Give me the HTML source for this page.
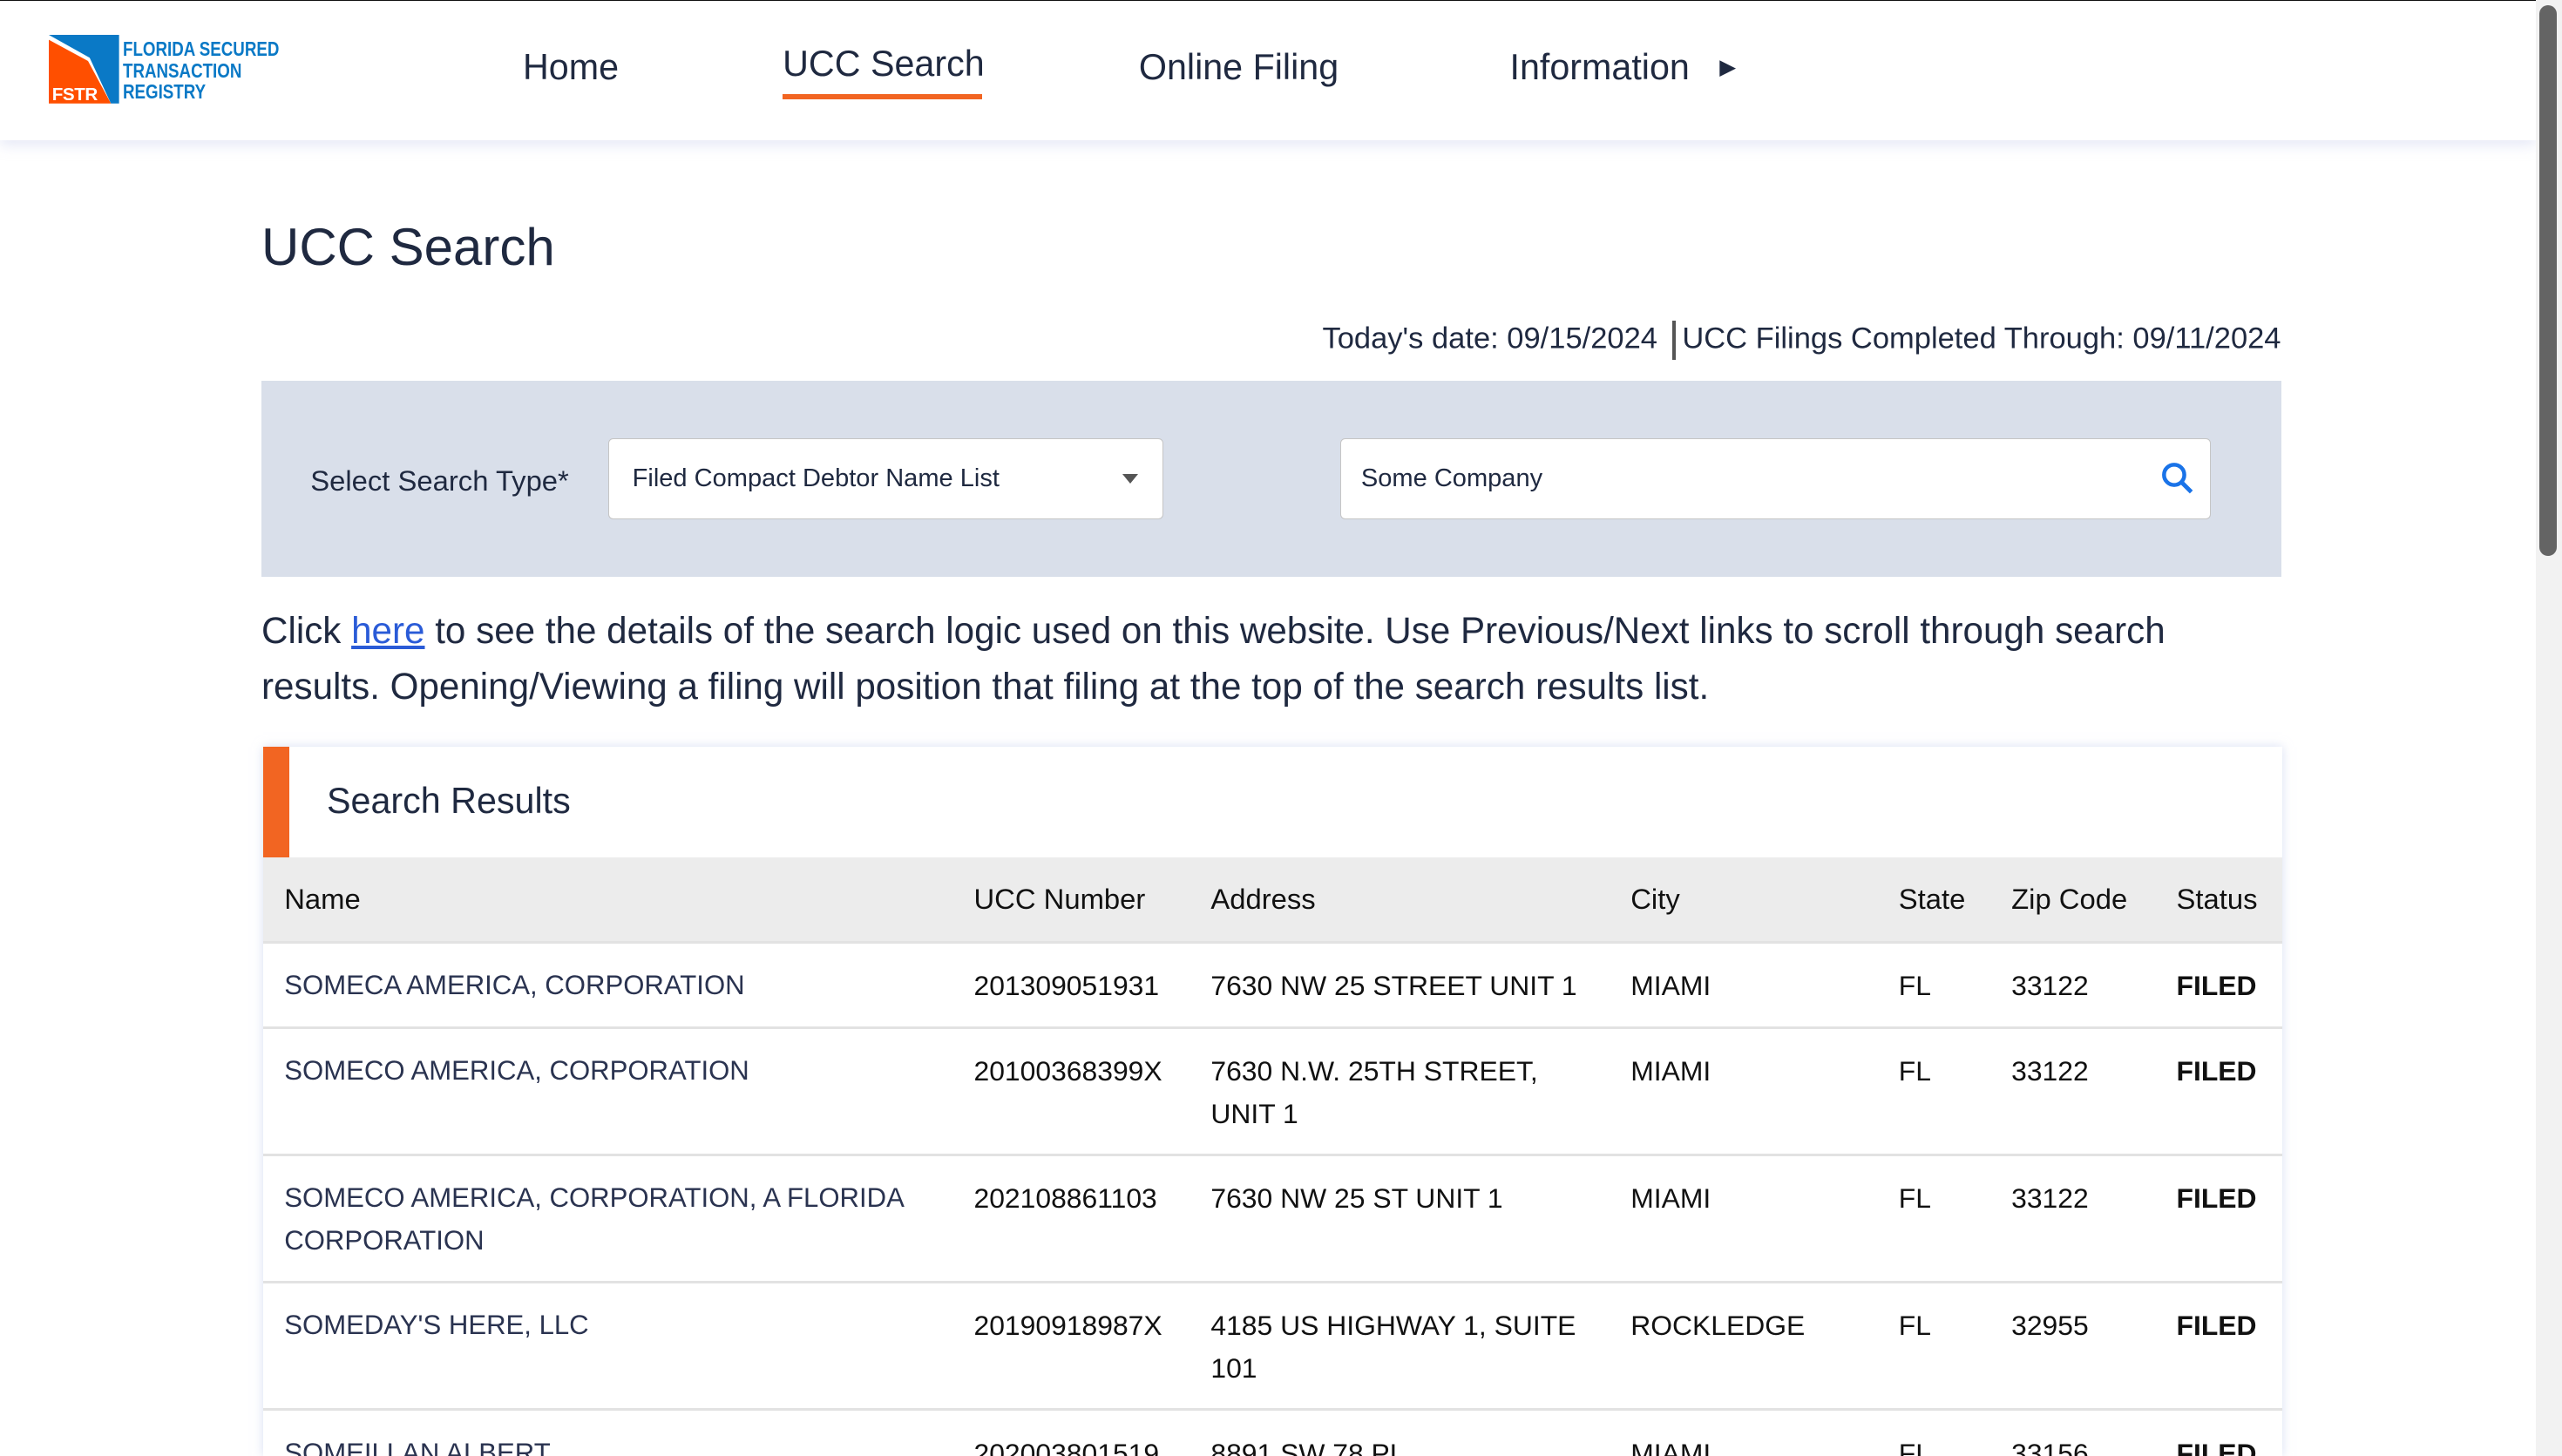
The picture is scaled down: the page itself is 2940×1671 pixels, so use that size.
<!DOCTYPE html>
<html><head><meta charset="utf-8"><style>
html,body{margin:0;padding:0;overflow:hidden;background:#fff}
body{width:1568px;height:891px;zoom:1.875;position:relative;font-family:"Liberation Sans",sans-serif;color:#1f2940;overflow:hidden}
.a{position:absolute;white-space:nowrap}
.hdr{position:absolute;left:0;top:0;width:1552px;height:86px;background:#fff;border-top:1px solid #111;box-sizing:border-box;box-shadow:0 3px 8px rgba(180,190,230,.35)}
.nav{font-size:22px;color:#1f2940;top:28px}
.tbl{position:absolute;left:161px;top:457px;width:1236px;height:434px;overflow:hidden;background:#fff;box-shadow:0 0 6px rgba(190,200,235,.6)}
.row{position:absolute;left:0;width:1236px;border-top:2px solid #e2e2e2;font-size:17px;color:#111}
.row span{position:absolute;top:13px;line-height:26px}
.row .n{left:13px;color:#2a3350;font-size:16.6px}
.row .s{font-weight:bold}
</style></head><body>
<div class="hdr">
 <svg class="a" style="left:30px;top:21px" width="44" height="42" viewBox="0 0 44 42">
  <polygon points="0,0 43,0 43,42 38,42 25,14 0,0" fill="#0a79c6"/>
  <polygon points="0,3 24,16 38,42 0,42" fill="#ff4f00"/>
  <text x="2" y="40" font-family="Liberation Sans" font-size="11" fill="#fff" font-weight="bold" textLength="28">FSTR</text>
 </svg>
 <div class="a" style="left:75px;top:23px;font-size:12.5px;line-height:13px;font-weight:bold;color:#0a79c6;transform:scaleX(.8);transform-origin:left">FLORIDA SECURED<br>TRANSACTION<br>REGISTRY</div>
 <div class="a nav" style="left:320px">Home</div>
 <div class="a nav" style="left:479px;top:26px">UCC Search</div>
 <div class="a" style="left:479px;top:57px;width:122px;height:3px;background:#f26522"></div>
 <div class="a nav" style="left:697px">Online Filing</div>
 <div class="a nav" style="left:924px">Information&nbsp;&nbsp; <span style="font-size:13px;position:relative;top:-3px">&#9654;</span></div>
</div>
<div class="a" style="left:1552px;top:0;width:16px;height:891px;background:#f2f2f2"></div>
<div class="a" style="left:1554px;top:3px;width:11px;height:337px;background:#646464;border-radius:6px"></div>

<div class="a" style="left:160px;top:133px;font-size:32px;color:#1f2940">UCC Search</div>
<div class="a" style="right:172px;top:196px;font-size:18.4px">Today's date: 09/15/2024 <span style="display:inline-block;width:2px;height:24px;background:#555;vertical-align:middle;margin:0 4px"></span>UCC Filings Completed Through: 09/11/2024</div>

<div class="a" style="left:160px;top:233px;width:1236px;height:120px;background:#d9dfea"></div>
<div class="a" style="left:190px;top:284px;font-size:17.5px">Select Search Type*</div>
<div class="a" style="left:372px;top:268px;width:340px;height:50px;box-sizing:border-box;background:#fff;border:1px solid #c5c5c5;border-radius:3px"></div>
<div class="a" style="left:387px;top:284px;font-size:15.5px">Filed Compact Debtor Name List</div>
<div class="a" style="left:687px;top:290px;width:0;height:0;border-left:5px solid transparent;border-right:5px solid transparent;border-top:6px solid #555"></div>
<div class="a" style="left:820px;top:268px;width:533px;height:50px;box-sizing:border-box;background:#fff;border:1px solid #c5c5c5;border-radius:3px"></div>
<div class="a" style="left:833px;top:284px;font-size:15.5px">Some Company</div>
<svg class="a" style="left:1322px;top:282px" width="22" height="22" viewBox="0 0 22 22"><circle cx="8.5" cy="8.5" r="6.2" fill="none" stroke="#1a73e8" stroke-width="2.4"/><line x1="13" y1="13" x2="19" y2="19" stroke="#1a73e8" stroke-width="2.6"/></svg>

<div class="a" style="left:160px;top:369px;font-size:22.5px;line-height:34px;white-space:normal;width:1240px">Click <span style="color:#2a5bd7;text-decoration:underline">here</span> to see the details of the search logic used on this website. Use Previous/Next links to scroll through search<br>results. Opening/Viewing a filing will position that filing at the top of the search results list.</div>

<div class="tbl">
 <div class="a" style="left:0;top:0;width:16px;height:68px;background:#f26522"></div>
 <div class="a" style="left:39px;top:21px;font-size:22px">Search Results</div>
 <div class="a" style="left:0;top:68px;width:1236px;height:52px;background:#ececec;font-size:17.5px;color:#111">
  <span class="a" style="left:13px;top:15px">Name</span><span class="a" style="left:435px;top:15px">UCC Number</span><span class="a" style="left:580px;top:15px">Address</span><span class="a" style="left:837px;top:15px">City</span><span class="a" style="left:1001px;top:15px">State</span><span class="a" style="left:1070px;top:15px">Zip Code</span><span class="a" style="left:1171px;top:15px">Status</span>
 </div>
 <div class="row" style="top:119px;height:52px"><span class="n">SOMECA AMERICA, CORPORATION</span><span style="left:435px">201309051931</span><span style="left:580px">7630 NW 25 STREET UNIT 1</span><span style="left:837px">MIAMI</span><span style="left:1001px">FL</span><span style="left:1070px">33122</span><span class="s" style="left:1171px">FILED</span></div>
 <div class="row" style="top:171px;height:78px"><span class="n">SOMECO AMERICA, CORPORATION</span><span style="left:435px">20100368399X</span><span style="left:580px">7630 N.W. 25TH STREET,<br>UNIT 1</span><span style="left:837px">MIAMI</span><span style="left:1001px">FL</span><span style="left:1070px">33122</span><span class="s" style="left:1171px">FILED</span></div>
 <div class="row" style="top:249px;height:78px"><span class="n">SOMECO AMERICA, CORPORATION, A FLORIDA<br>CORPORATION</span><span style="left:435px">202108861103</span><span style="left:580px">7630 NW 25 ST UNIT 1</span><span style="left:837px">MIAMI</span><span style="left:1001px">FL</span><span style="left:1070px">33122</span><span class="s" style="left:1171px">FILED</span></div>
 <div class="row" style="top:327px;height:78px"><span class="n">SOMEDAY'S HERE, LLC</span><span style="left:435px">20190918987X</span><span style="left:580px">4185 US HIGHWAY 1, SUITE<br>101</span><span style="left:837px">ROCKLEDGE</span><span style="left:1001px">FL</span><span style="left:1070px">32955</span><span class="s" style="left:1171px">FILED</span></div>
 <div class="row" style="top:405px;height:78px"><span class="n">SOMEILLAN ALBERT</span><span style="left:435px">202003801519</span><span style="left:580px">8891 SW 78 PL</span><span style="left:837px">MIAMI</span><span style="left:1001px">FL</span><span style="left:1070px">33156</span><span class="s" style="left:1171px">FILED</span></div>
</div>
</body></html>
